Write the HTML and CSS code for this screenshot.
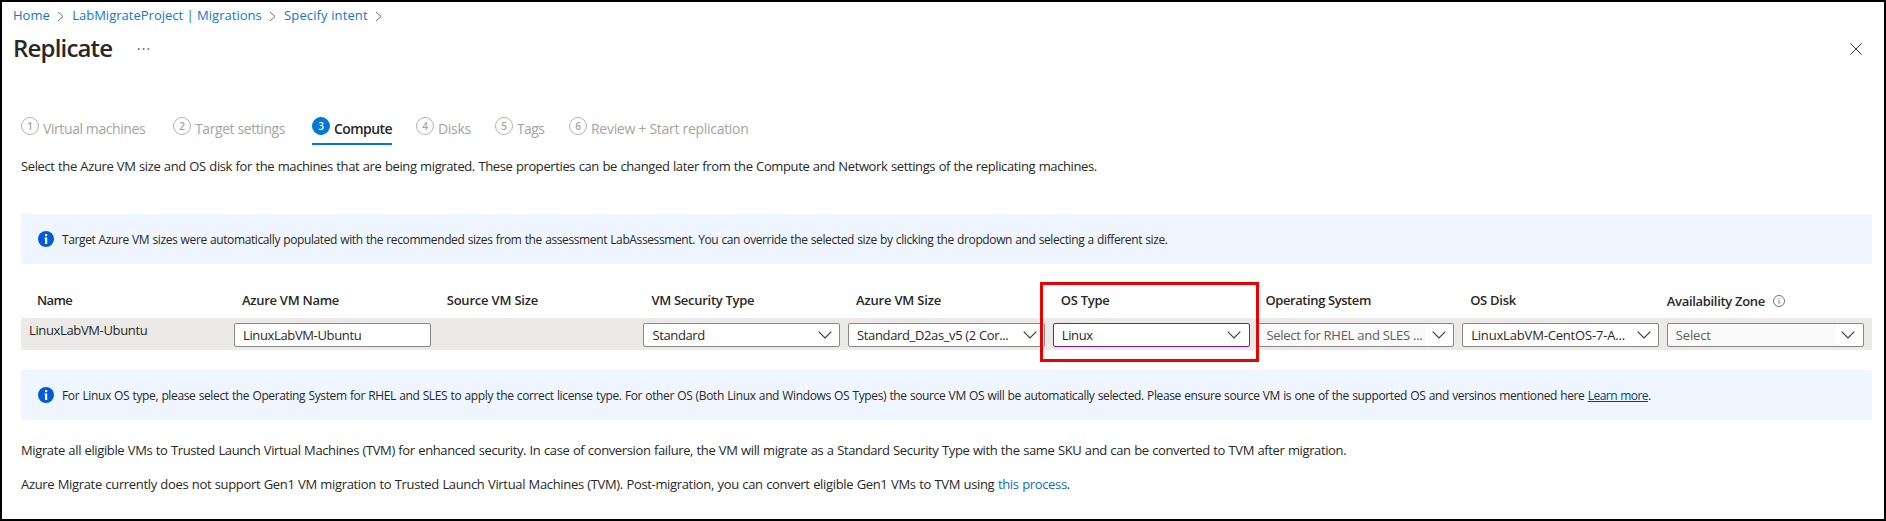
FILE: index.html
```html
<!DOCTYPE html>
<html lang="en">
<head>
<meta charset="utf-8">
<title>Replicate</title>
<link rel="stylesheet" href="styles.css">
</head>
<body>
<svg class="defs" width="0" height="0">
  <symbol id="sep" viewBox="0 0 7 11"><path d="M1 1l5 4.5L1 10"/></symbol>
  <symbol id="chev" viewBox="0 0 14 8"><path d="M.7.7 7 7 13.3.7"/></symbol>
  <symbol id="info" viewBox="0 0 16 16"><circle cx="8" cy="8" r="8" fill="#015cda"/><rect x="7" y="3" width="2.2" height="2.2" rx=".4" fill="#fff"/><path d="M6.6 6.6h2.6V13H7V8h-.4z" fill="#fff"/></symbol>
</svg>
<div class="blade">
  <nav class="crumbs">
    <a class="crumb">Home</a><svg class="sep"><use href="#sep"/></svg>
    <a class="crumb">LabMigrateProject | Migrations</a><svg class="sep"><use href="#sep"/></svg>
    <a class="crumb wide">Specify intent</a><svg class="sep"><use href="#sep"/></svg>
  </nav>
  <header class="head">
    <h1 class="title">Replicate</h1>
    <svg class="dots" viewBox="0 0 12 2"><path d="M0 .3h1.6v1.4H0zM4.8.3h1.6v1.4H4.8zM9.6.3h1.6v1.4H9.6z"/></svg>
    <svg class="close" viewBox="0 0 12 12"><path d="M.4.4l11.2 11.2M11.6.4.4 11.6"/></svg>
  </header>
  <div class="tabs">
    <div class="tab"><span class="num">1</span><span class="label">Virtual machines</span></div>
    <div class="tab"><span class="num">2</span><span class="label">Target settings</span></div>
    <div class="tab active"><span class="num">3</span><span class="label">Compute</span></div>
    <div class="tab"><span class="num">4</span><span class="label loose">Disks</span></div>
    <div class="tab"><span class="num">5</span><span class="label tight">Tags</span></div>
    <div class="tab"><span class="num">6</span><span class="label loose">Review + Start replication</span></div>
  </div>
  <p class="para intro">Select the Azure VM size and OS disk for the machines that are being migrated. These properties can be changed later from the Compute and Network settings of the replicating machines.</p>
  <div class="banner"><svg class="info-icon"><use href="#info"/></svg><span class="banner-text sizes">Target Azure VM sizes were automatically populated with the recommended sizes from the assessment LabAssessment. You can override the selected size by clicking the dropdown and selecting a different size.</span></div>
  <div class="table">
    <div class="row header">
      <span class="th first">Name</span>
      <span class="th">Azure VM Name</span>
      <span class="th snug">Source VM Size</span>
      <span class="th">VM Security Type</span>
      <span class="th snug">Azure VM Size</span>
      <span class="th">OS Type</span>
      <span class="th close-set">Operating System</span>
      <span class="th">OS Disk</span>
      <span class="th zone">Availability Zone<svg class="hint" viewBox="0 0 12 12"><circle cx="6" cy="6" r="5.5"/><path d="M6 5.2v3.6M6 3v1.1"/></svg></span>
    </div>
    <div class="row body">
      <span class="vm">LinuxLabVM-Ubuntu</span>
      <div class="field">LinuxLabVM-Ubuntu</div>
      <span></span>
      <div class="field select">Standard<svg class="chev"><use href="#chev"/></svg></div>
      <div class="field select">Standard_D2as_v5 (2 Cor...<svg class="chev"><use href="#chev"/></svg></div>
      <div class="field select focus">Linux<svg class="chev"><use href="#chev"/></svg></div>
      <div class="field select empty">Select for RHEL and SLES ...<svg class="chev"><use href="#chev"/></svg></div>
      <div class="field select disk">LinuxLabVM-CentOS-7-A...<svg class="chev"><use href="#chev"/></svg></div>
      <div class="field select empty disk">Select<svg class="chev"><use href="#chev"/></svg></div>
    </div>
    <div class="highlight"></div>
  </div>
  <div class="banner second"><svg class="info-icon"><use href="#info"/></svg><span class="banner-text license">For Linux OS type, please select the Operating System for RHEL and SLES to apply the correct license type. For other OS (Both Linux and Windows OS Types) the source VM OS will be automatically selected. Please ensure source VM is one of the supported OS and versinos mentioned here <a class="more">Learn more</a>.</span></div>
  <p class="para tvm">Migrate all eligible VMs to Trusted Launch Virtual Machines (TVM) for enhanced security. In case of conversion failure, the VM will migrate as a Standard Security Type with the same SKU and can be converted to TVM after migration.</p>
  <p class="para gen1">Azure Migrate currently does not support Gen1 VM migration to Trusted Launch Virtual Machines (TVM). Post-migration, you can convert eligible Gen1 VMs to TVM using <a class="process">this process</a>.</p>
</div>
</body>
</html>
```
FILE: styles.css
```css
* { box-sizing: border-box; }
body {
  margin: 0;
  background: #fff;
  color: #292827;
  font: 13px/20px "Open Sans", "Noto Sans", sans-serif;
  white-space: nowrap;
}
.defs { position: absolute; }
.blade {
  width: 1886px;
  height: 521px;
  border: 2px solid #000;
  overflow: hidden;
}
svg { flex: none; fill: none; }

.crumbs { display: flex; align-items: center; height: 26px; padding-left: 11px; color: #0f78d2; letter-spacing: .01px; }
.crumb.wide { letter-spacing: .12px; }
.sep { width: 7px; height: 11px; margin: 2px 7.7px 0; stroke: #75726f; }

.head { display: flex; align-items: center; height: 40px; padding: 0 22px 0 11px; }
.title { margin: 0; font-size: 24px; line-height: 40px; font-weight: 600; letter-spacing: -.82px; }
.dots { width: 12px; height: 2px; margin: 1px 0 0 26px; fill: #555; }
.close { width: 12px; height: 12px; margin: 2px 0 0 auto; stroke: #333; }

.tabs {
  display: grid;
  grid-template-columns: 152px 139px 104px 79px 74px auto;
  margin: 49px 0 0 19px;
  height: 28px;
  font-size: 14px;
  line-height: 24px;
  letter-spacing: -.41px;
  color: #a6a4a2;
}
.tab { display: flex; gap: 4px; justify-self: start; height: 28px; }
.num {
  width: 18px;
  height: 18px;
  border: 1px solid #b5b3b1;
  border-radius: 50%;
  font-size: 10px;
  line-height: 16px;
  font-weight: 600;
  letter-spacing: 0;
  text-align: center;
}
.loose { letter-spacing: -.29px; }
.tight { letter-spacing: -.6px; }
.active { width: 80px; border-bottom: 2px solid #0078d4; color: #292827; font-weight: 600; letter-spacing: -.57px; }
.active .num { background: #0078d4; border-color: #0078d4; color: #fff; }

.para { margin: 0 0 0 19px; word-spacing: .5px; }
.intro { margin-top: 11px; letter-spacing: -.381px; }
.tvm { margin-top: 20px; letter-spacing: -.376px; }
.gen1 { margin-top: 14px; letter-spacing: -.342px; }
.process { color: #0f6cbd; }

.banner {
  display: flex;
  align-items: center;
  gap: 8px;
  height: 50px;
  margin: 38px 12px 0 19px;
  padding-left: 17px;
  border-radius: 2px;
  background: #eff6ff;
  font-size: 12px;
}
.banner.second { margin-top: 20px; }
.banner-text { padding-top: 2px; word-spacing: .5px; }
.info-icon { width: 16px; height: 16px; }
.sizes { letter-spacing: -.389px; }
.license { letter-spacing: -.372px; }
.more { color: #004578; text-decoration: underline; letter-spacing: -.52px; }

.table { position: relative; margin: 0 12px 0 19px; }
.row { display: grid; grid-template-columns: 213px repeat(8, 204.7px); }
.header { height: 54px; padding-top: 26px; align-items: start; font-weight: 600; letter-spacing: -.28px; }
.th { padding-left: 8px; }
.th.first { padding-left: 16px; letter-spacing: -.6px; }
.snug { letter-spacing: -.2px; }
.close-set { letter-spacing: -.41px; }
.th.zone { display: flex; align-items: center; padding: 1px 0 0; letter-spacing: -.32px; }
.hint { width: 12px; height: 12px; margin-left: 8px; stroke: #75726f; }
.body { height: 32px; background: #ebeae8; padding-top: 5px; letter-spacing: -.36px; }
.vm { padding-left: 8px; margin-top: -3px; }
.field {
  display: flex;
  align-items: center;
  width: 197px;
  height: 24px;
  padding: 0 8px;
  border: 1px solid #8a8886;
  border-radius: 2px;
  background: #fff;
}
.select { padding-right: 7.5px; }
.focus { border-color: #881798; }
.empty { color: #605e5c; letter-spacing: -.27px; background: linear-gradient(90deg, #fafafa 168px, #fff 168px); }
.disk { letter-spacing: -.17px; }
.chev { width: 14px; height: 8px; margin-left: auto; stroke: #3b3a39; stroke-width: 1.1; }

.highlight {
  position: absolute;
  left: 1019px;
  top: 18px;
  width: 219px;
  height: 80px;
  border: 3px solid #ec0000;
}
```
